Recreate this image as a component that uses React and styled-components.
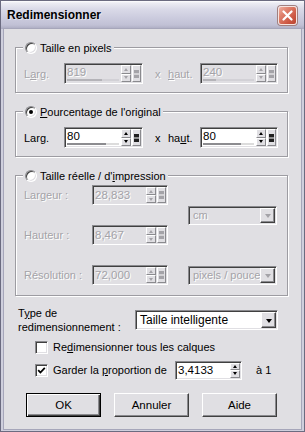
import React from "react";
import styled, { createGlobalStyle, css } from "styled-components";

const BG = "#e0dfe3";
const DIS = "#a4a3a8";

const GlobalStyle = createGlobalStyle`
  html, body { margin: 0; padding: 0; }
  body {
    background: ${BG};
    font-family: "Liberation Sans", Arial, sans-serif;
    font-size: 11px;
    color: #000;
  }
  *, *::before, *::after { box-sizing: border-box; }
`;

const Window = styled.div`
  width: 305px;
  height: 432px;
  display: flex;
  flex-direction: column;
  background: #cfcfdd;
  border: 1px solid #6b6b80;
  padding: 0 3px 2px;
`;

const TitleBar = styled.div`
  height: 28px;
  margin: 0 -3px;
  display: flex;
  align-items: center;
  justify-content: space-between;
  padding: 0 7px 0 6px;
  background: linear-gradient(
    to bottom,
    #ffffff 0px,
    #ececf3 2px,
    #dadae8 8px,
    #cdcddf 16px,
    #c1c1d5 24px,
    #aaaac0 28px
  );
`;

const TitleText = styled.span`
  font-weight: bold;
  font-size: 12px;
  color: #000;
  text-shadow: 1px 1px 0 rgba(255, 255, 255, 0.5);
`;

const CloseBtn = styled.div`
  width: 19px;
  height: 19px;
  border: 1px solid #f7e4e0;
  border-radius: 3px;
  box-shadow: 0 0 0 1px #a08080;
  background: linear-gradient(135deg, #efb0a2 0%, #e08470 30%, #cd5844 70%, #b9442f 100%);
  display: flex;
  align-items: center;
  justify-content: center;
`;

const Body = styled.div`
  flex: 1;
  background: ${BG};
  box-shadow: 0 0 0 1px #a6a6ba;
  padding: 12px 0 0 11px;
  display: flex;
  flex-direction: column;
`;

const Group = styled.fieldset`
  margin: ${(p) => p.$mt || 0}px 0 0 0;
  width: 273px;
  min-width: 0;
  padding: ${(p) => p.$pt}px 0 ${(p) => p.$pb}px 8px;
  border: 1px solid #9d9ca2;
  box-shadow: inset 1px 1px 0 #fff, 1px 1px 0 #fff;
`;

const Legend = styled.legend`
  display: flex;
  align-items: center;
  gap: 3px;
  height: 13px;
  padding: 0 2px;
  margin-left: -1px;
  background: ${BG};
  white-space: nowrap;
`;

const Text = styled.span`
  white-space: nowrap;
  color: ${(p) => (p.$disabled ? DIS : "#000")};
  ${(p) =>
    p.$disabled &&
    css`
      text-shadow: 1px 1px 0 #fff;
    `}
`;

const FieldLabel = styled(Text)`
  width: ${(p) => p.$w}px;
  flex: none;
  ${(p) =>
    p.$pl &&
    css`
      padding-left: ${p.$pl}px;
    `}
`;

const Row = styled.div`
  display: flex;
  align-items: center;
  height: ${(p) => p.$h || 21}px;
`;

const Grid3 = styled.div`
  display: grid;
  grid-template-columns: 68px 76px 20px 89px;
  grid-template-rows: 20px 20px 20px;
  row-gap: 20px;
  align-items: center;
`;

const GridCell = styled.div`
  grid-column: ${(p) => p.$col};
  grid-row: ${(p) => p.$row};
  display: flex;
  align-items: center;
`;

const RadioCircle = styled.span`
  width: 12px;
  height: 12px;
  border-radius: 50%;
  background: #fff;
  border: 1px solid;
  border-color: #8a8a8e #fff #fff #8a8a8e;
  box-shadow: inset 1px 1px 0 #404040, inset -1px -1px 0 ${BG};
  display: flex;
  align-items: center;
  justify-content: center;
  flex: none;
  &::after {
    content: "";
    width: 4px;
    height: 4px;
    border-radius: 50%;
    background: ${(p) => (p.$checked ? "#000" : "transparent")};
  }
`;

const sunken = css`
  border: 1px solid;
  border-color: #8a8a8e #fff #fff #8a8a8e;
  box-shadow: inset 1px 1px 0 #404040, inset -1px -1px 0 ${BG};
`;

const raised = css`
  background: ${BG};
  border: 1px solid;
  border-color: #fff #404040 #404040 #fff;
  box-shadow: inset -1px -1px 0 #8a8a8e;
`;

const softRaised = css`
  background: ${BG};
  border: 1px solid;
  border-color: #fff #8a8a8e #8a8a8e #fff;
`;

const SpinFrame = styled.div`
  ${sunken};
  width: ${(p) => p.$w}px;
  height: ${(p) => p.$h}px;
  padding: 1px;
  display: flex;
  flex: none;
  background: ${(p) => (p.$disabled ? BG : "#fff")};
`;

const SpinField = styled.div`
  flex: 1;
  display: flex;
  flex-direction: column;
  min-width: 0;
`;

const SpinValue = styled(Text)`
  flex: 1;
  display: flex;
  align-items: center;
  padding-left: 1px;
  font-size: 11.5px;
`;

const Track = styled.div`
  height: 2px;
  margin: 0 2px 1px 1px;
  background: ${(p) => (p.$disabled ? "#d2d1d6" : "#dcdcdc")};
`;

const TrackFill = styled.div`
  height: 100%;
  background: ${(p) => (p.$disabled ? "#b4b3b8" : "#8c8c90")};
`;

const Arrows = styled.div`
  width: 10px;
  display: flex;
  flex-direction: column;
  flex: none;
`;

const ArrowBtn = styled.div`
  flex: 1;
  ${softRaised};
  display: flex;
  align-items: center;
  justify-content: center;
`;

const Tri = styled.span`
  width: 0;
  height: 0;
  border-left: 2.5px solid transparent;
  border-right: 2.5px solid transparent;
  ${(p) =>
    p.$up
      ? css`
          border-bottom: 3px solid ${p.$disabled ? DIS : "#000"};
        `
      : css`
          border-top: 3px solid ${p.$disabled ? DIS : "#000"};
        `}
`;

const SliderBtn = styled.div`
  width: 9px;
  margin-left: 1px;
  ${softRaised};
  display: flex;
  align-items: center;
  justify-content: center;
  flex: none;
`;

function SpinBox({ w, h = 21, value, disabled, slider = true, fill }) {
  return (
    <SpinFrame $w={w} $h={h} $disabled={disabled}>
      <SpinField>
        <SpinValue $disabled={disabled}>{value}</SpinValue>
        {fill != null && (
          <Track $disabled={disabled}>
            <TrackFill $disabled={disabled} style={{ width: `${fill * 100}%` }} />
          </Track>
        )}
      </SpinField>
      <Arrows>
        <ArrowBtn>
          <Tri $up $disabled={disabled} />
        </ArrowBtn>
        <ArrowBtn>
          <Tri $disabled={disabled} />
        </ArrowBtn>
      </Arrows>
      {slider && (
        <SliderBtn>
          <svg width="5" height="8" viewBox="0 0 5 8">
            <rect x="0" y="0" width="5" height="8" fill={disabled ? DIS : "#202020"} />
            <rect x="0" y="3.5" width="5" height="1" fill="#fff" />
          </svg>
        </SliderBtn>
      )}
    </SpinFrame>
  );
}

const ComboFrame = styled.div`
  ${sunken};
  width: ${(p) => p.$w}px;
  height: ${(p) => p.$h}px;
  padding: 1px;
  display: flex;
  flex: none;
  background: ${(p) => (p.$disabled ? BG : "#fff")};
`;

const ComboText = styled(Text)`
  flex: 1;
  display: flex;
  align-items: center;
  padding-left: 3px;
  font-size: ${(p) => (p.$big ? 12 : 11)}px;
  overflow: hidden;
`;

const ComboBtn = styled.div`
  width: 15px;
  ${raised};
  display: flex;
  align-items: center;
  justify-content: center;
  flex: none;
`;

const ComboTri = styled.span`
  width: 0;
  height: 0;
  border-left: 3.5px solid transparent;
  border-right: 3.5px solid transparent;
  border-top: 4px solid ${(p) => (p.$disabled ? DIS : "#000")};
  margin-top: 1px;
`;

function Combo({ w, h = 20, value, disabled, big }) {
  return (
    <ComboFrame $w={w} $h={h} $disabled={disabled}>
      <ComboText $disabled={disabled} $big={big}>
        {value}
      </ComboText>
      <ComboBtn>
        <ComboTri $disabled={disabled} />
      </ComboBtn>
    </ComboFrame>
  );
}

const TypeRow = styled.div`
  display: flex;
  align-items: center;
  margin: 10px 0 0 3px;
  height: 28px;
`;

const TypeLabel = styled.div`
  width: 117px;
  line-height: 14px;
  flex: none;
`;

const CheckRow = styled.div`
  display: flex;
  align-items: center;
  height: ${(p) => p.$h}px;
  margin: 6px 0 0 20px;
`;

const CheckBox = styled.span`
  ${sunken};
  width: 13px;
  height: 13px;
  background: #fff;
  display: flex;
  align-items: center;
  justify-content: center;
  flex: none;
  margin-right: 5px;
`;

const CheckLabel = styled(Text)`
  width: ${(p) => (p.$w ? `${p.$w}px` : "auto")};
  flex: none;
`;

const After = styled.span`
  margin-left: 14px;
`;

const ButtonRow = styled.div`
  display: flex;
  gap: 13px;
  margin: 13px 0 0 11px;
`;

const Button = styled.button`
  width: 75px;
  height: 24px;
  padding: 0;
  font-family: "Liberation Sans", Arial, sans-serif;
  font-size: 11.5px;
  color: #000;
  background: ${BG};
  border: 1px solid;
  ${(p) =>
    p.$default
      ? css`
          border-color: #000;
          box-shadow: inset 1px 1px 0 #fff, inset -1px -1px 0 #404040, inset -2px -2px 0 #8a8a8e;
        `
      : css`
          border-color: #fff #404040 #404040 #fff;
          box-shadow: inset -1px -1px 0 #8a8a8e;
        `}
`;

export default function App() {
  return (
    <>
      <GlobalStyle />
      <Window>
        <TitleBar>
          <TitleText>Redimensionner</TitleText>
          <CloseBtn>
            <svg width="11" height="11" viewBox="0 0 11 11">
              <path d="M1.5 1.5 L9.5 9.5 M9.5 1.5 L1.5 9.5" stroke="#fff" strokeWidth="2.2" strokeLinecap="round" />
            </svg>
          </CloseBtn>
        </TitleBar>
        <Body>
          <Group $pt={9} $pb={8}>
            <Legend>
              <RadioCircle />
              <Text>Taille en pixels</Text>
            </Legend>
            <Row>
              <FieldLabel $w={40} $disabled>
                L<u>a</u>rg.
              </FieldLabel>
              <SpinBox w={79} value="819" disabled fill={0.68} />
              <FieldLabel $w={25} $pl={12} $disabled>
                x
              </FieldLabel>
              <FieldLabel $w={32} $disabled>
                <u>h</u>aut.
              </FieldLabel>
              <SpinBox w={78} value="240" disabled fill={0.25} />
            </Row>
          </Group>

          <Group $mt={12} $pt={9} $pb={8}>
            <Legend>
              <RadioCircle $checked />
              <Text>
                <u>P</u>ourcentage de l'original
              </Text>
            </Legend>
            <Row>
              <FieldLabel $w={40}>Larg.</FieldLabel>
              <SpinBox w={79} value="80" fill={0.75} />
              <FieldLabel $w={25} $pl={12}>
                x
              </FieldLabel>
              <FieldLabel $w={32}>
                ha<u>u</u>t.
              </FieldLabel>
              <SpinBox w={78} value="80" fill={0.75} />
            </Row>
          </Group>

          <Group $mt={12} $pt={3} $pb={10}>
            <Legend>
              <RadioCircle />
              <Text>
                Taille réelle / d'<u>i</u>mpression
              </Text>
            </Legend>
            <Grid3>
              <GridCell $col="1" $row="1">
                <Text $disabled>Largeur :</Text>
              </GridCell>
              <GridCell $col="2" $row="1">
                <SpinBox w={76} h={20} value="28,833" disabled />
              </GridCell>
              <GridCell $col="1" $row="2">
                <Text $disabled>Hauteur :</Text>
              </GridCell>
              <GridCell $col="2" $row="2">
                <SpinBox w={76} h={20} value="8,467" disabled />
              </GridCell>
              <GridCell $col="4" $row="1 / 3">
                <Combo w={89} h={19} value="cm" disabled />
              </GridCell>
              <GridCell $col="1" $row="3">
                <Text $disabled>Résolution :</Text>
              </GridCell>
              <GridCell $col="2" $row="3">
                <SpinBox w={76} h={20} value="72,000" disabled />
              </GridCell>
              <GridCell $col="4" $row="3">
                <Combo w={89} h={19} value="pixels / pouce" disabled />
              </GridCell>
            </Grid3>
          </Group>

          <TypeRow>
            <TypeLabel>
              T<u>y</u>pe de
              <br />
              redimensionnement :
            </TypeLabel>
            <Combo w={143} h={20} value="Taille intelligente" big />
          </TypeRow>

          <CheckRow $h={14}>
            <CheckBox />
            <CheckLabel>
              Re<u>d</u>imensionner tous les calques
            </CheckLabel>
          </CheckRow>

          <CheckRow $h={20}>
            <CheckBox>
              <svg width="9" height="9" viewBox="0 0 9 9">
                <path d="M1.2 4.2 L3.4 6.5 L7.8 1.8" fill="none" stroke="#000" strokeWidth="1.8" />
              </svg>
            </CheckBox>
            <CheckLabel $w={122}>
              Garder la <u>p</u>roportion de
            </CheckLabel>
            <SpinBox w={67} h={19} value="3,4133" slider={false} />
            <After>à 1</After>
          </CheckRow>

          <ButtonRow>
            <Button $default>OK</Button>
            <Button>Annuler</Button>
            <Button>Aide</Button>
          </ButtonRow>
        </Body>
      </Window>
    </>
  );
}
